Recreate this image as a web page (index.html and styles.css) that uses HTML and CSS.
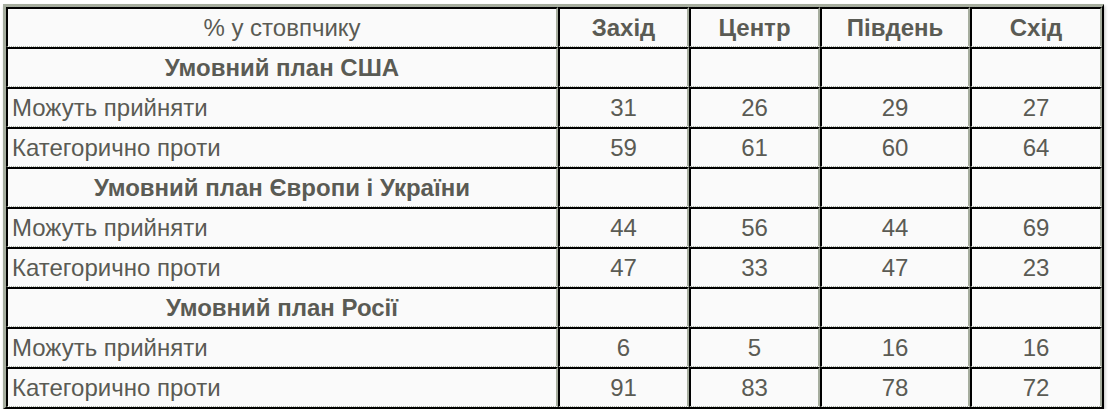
FILE: index.html
```html
<!DOCTYPE html>
<html lang="uk">
<head>
<meta charset="utf-8">
<title>Таблиця</title>
<link rel="stylesheet" href="styles.css">
</head>
<body>
<table class="poll">
  <colgroup>
    <col class="c-label">
    <col class="c-a">
    <col class="c-b">
    <col class="c-c">
    <col class="c-d">
  </colgroup>
  <thead>
    <tr>
      <th class="head-label">% у стовпчику</th>
      <th>Захід</th>
      <th>Центр</th>
      <th>Південь</th>
      <th>Схід</th>
    </tr>
  </thead>
  <tbody>
    <tr class="group"><td class="group-label">Умовний план США</td><td></td><td></td><td></td><td></td></tr>
    <tr><td class="label">Можуть прийняти</td><td>31</td><td>26</td><td>29</td><td>27</td></tr>
    <tr><td class="label">Категорично проти</td><td>59</td><td>61</td><td>60</td><td>64</td></tr>
    <tr class="group"><td class="group-label">Умовний план Європи і України</td><td></td><td></td><td></td><td></td></tr>
    <tr><td class="label">Можуть прийняти</td><td>44</td><td>56</td><td>44</td><td>69</td></tr>
    <tr><td class="label">Категорично проти</td><td>47</td><td>33</td><td>47</td><td>23</td></tr>
    <tr class="group"><td class="group-label">Умовний план Росії</td><td></td><td></td><td></td><td></td></tr>
    <tr><td class="label">Можуть прийняти</td><td>6</td><td>5</td><td>16</td><td>16</td></tr>
    <tr><td class="label">Категорично проти</td><td>91</td><td>83</td><td>78</td><td>72</td></tr>
  </tbody>
</table>
</body>
</html>
```
FILE: styles.css
```css
html, body {
  margin: 0;
  padding: 0;
  background: #ffffff;
}

.poll {
  margin: 4px 0 0 3px;
  width: 1101px;
  table-layout: fixed;
  border-collapse: separate;
  border-spacing: 0;
  border-style: solid;
  border-width: 3px 2px 2px 3px;
  border-color: #a6ad9e #000000 #000000 #a6ad9e;
  box-shadow: 1px 2px 3px rgba(0, 0, 0, 0.25);
  font-family: "Liberation Sans", Arial, sans-serif;
  font-size: 24px;
  color: #5a5b54;
  background: #fafafa;
}

.c-label { width: 552px; }
.c-a { width: 131px; }
.c-b { width: 131px; }
.c-c { width: 150px; }
.c-d { width: 132px; }

.poll th,
.poll td {
  height: 40px;
  padding: 0 4px;
  box-sizing: border-box;
  border-style: solid;
  border-width: 2px 2px 1px 2px;
  border-color: #000000 #a6ad9e #a6ad9e #000000;
  border-bottom-style: dotted;
  text-align: center;
  vertical-align: middle;
  background: #fafafa;
  line-height: 26px;
}

.poll th {
  font-weight: bold;
}

.poll th.head-label {
  font-weight: normal;
}

.poll td.label {
  text-align: left;
}

.poll td.group-label {
  font-weight: bold;
  text-align: center;
}
```
